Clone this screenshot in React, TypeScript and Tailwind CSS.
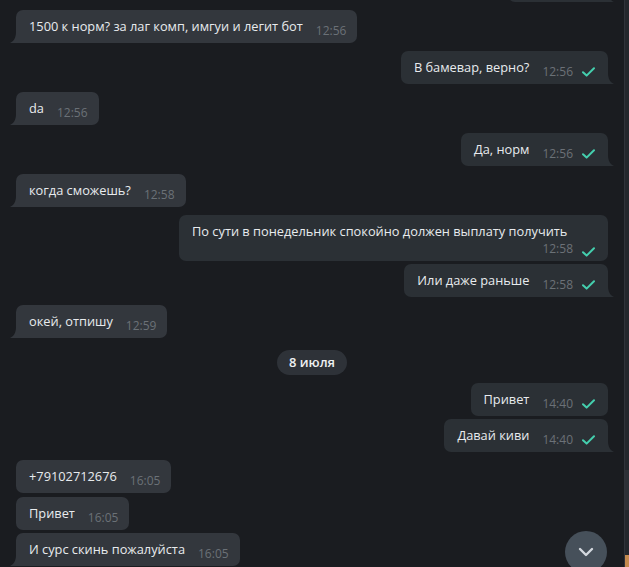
import React from 'react';
import clsx from 'clsx';

interface Msg {
  out: boolean;
  text: string;
  time: string;
  tail: boolean;
  gap: string;
}

const messages: Msg[] = [
  { out: false, text: '1500 к норм? за лаг комп, имгуи и легит бот', time: '12:56', tail: true, gap: 'mt-[8px]' },
  { out: true, text: 'В бамевар, верно?', time: '12:56', tail: true, gap: 'mt-[8px]' },
  { out: false, text: 'da', time: '12:56', tail: true, gap: 'mt-[8px]' },
  { out: true, text: 'Да, норм', time: '12:56', tail: true, gap: 'mt-[8px]' },
  { out: false, text: 'когда сможешь?', time: '12:58', tail: true, gap: 'mt-[8px]' },
];

const afterLong: Msg[] = [
  { out: true, text: 'Или даже раньше', time: '12:58', tail: true, gap: 'mt-[3px]' },
  { out: false, text: 'окей, отпишу', time: '12:59', tail: true, gap: 'mt-[8px]' },
];

const afterDate: Msg[] = [
  { out: true, text: 'Привет', time: '14:40', tail: false, gap: 'mt-[8px]' },
  { out: true, text: 'Давай киви', time: '14:40', tail: true, gap: 'mt-[3px]' },
  { out: false, text: '+79102712676', time: '16:05', tail: false, gap: 'mt-[8px]' },
  { out: false, text: 'Привет', time: '16:05', tail: false, gap: 'mt-[4px]' },
  { out: false, text: 'И сурс скинь пожалуйста', time: '16:05', tail: true, gap: 'mt-[3px]' },
];

function Check() {
  return (
    <svg width="13" height="10" viewBox="0 0 13 10" className="ml-[9px] shrink-0">
      <polyline points="1,5.2 4.6,8.6 12,1.2" fill="none" stroke="#44cfae" strokeWidth="2" strokeLinecap="round" strokeLinejoin="round" />
    </svg>
  );
}

function Tail({ out }: { out: boolean }) {
  if (out) {
    return (
      <svg width="6" height="11" viewBox="0 0 6 11" className="absolute right-[-6px] bottom-0">
        <path d="M0 0 C0 6 2.5 9.5 6 11 L0 11 Z" fill="#2b3035" />
      </svg>
    );
  }
  return (
    <svg width="6" height="11" viewBox="0 0 6 11" className="absolute left-[-6px] bottom-0">
      <path d="M6 0 C6 6 3.5 9.5 0 11 L6 11 Z" fill="#33373d" />
    </svg>
  );
}

function Bubble({ m }: { m: Msg }) {
  return (
    <div className={clsx('flex', m.out ? 'justify-end' : 'justify-start', m.gap)}>
      <div
        className={clsx(
          'relative flex items-end rounded-[7px] pl-[13px] pt-[6px] pb-[7px]',
          m.out ? 'bg-[#2b3035] pr-[13px]' : 'bg-[#33373d] pr-[11px]',
          m.tail && (m.out ? 'rounded-br-none' : 'rounded-bl-none')
        )}
      >
        <span className="text-[12.8px] leading-[20px] text-[#e8ebee] whitespace-nowrap">{m.text}</span>
        <span className="ml-[13px] -mb-[3px] text-[12px] leading-[16px] text-[#6b7177]">{m.time}</span>
        {m.out && <Check />}
        {m.tail && <Tail out={m.out} />}
      </div>
    </div>
  );
}

export default function App() {
  return (
    <div className="flex h-[567px] w-[629px] overflow-hidden bg-[#1a1c20]" style={{ fontFamily: '"Open Sans", "Noto Sans", sans-serif' }}>
      <div className="relative flex w-[624px] flex-col px-[16px]">
        {/* partially scrolled-out bubble */}
        <div className="-mt-[31px] flex justify-end">
          <div className="relative h-[33px] w-[100px] rounded-[7px] rounded-br-none bg-[#2b3035]">
            <Tail out />
          </div>
        </div>

        {messages.map((m, i) => (
          <Bubble key={i} m={m} />
        ))}

        {/* wrapped long message */}
        <div className="mt-[8px] flex justify-end">
          <div className="w-[429px] rounded-[7px] bg-[#2b3035] pl-[13px] pr-[13px] pt-[6px] pb-[4px]">
            <div className="text-[12.8px] leading-[20px] text-[#e8ebee] whitespace-nowrap">
              По сути в понедельник спокойно должен выплату получить
            </div>
            <div className="flex items-end justify-end">
              <span className="text-[12px] leading-[16px] text-[#6b7177]">12:58</span>
              <Check />
            </div>
          </div>
        </div>

        {afterLong.map((m, i) => (
          <Bubble key={i} m={m} />
        ))}

        <div className="mt-[12px] flex justify-center">
          <div className="flex h-[25px] items-center rounded-full bg-[#2e3238] px-[12px] text-[13px] font-semibold text-[#eef0f2]">
            8 июля
          </div>
        </div>

        {afterDate.map((m, i) => (
          <Bubble key={i} m={m} />
        ))}

        {/* scroll to bottom */}
        <button className="absolute right-[17px] bottom-[-6px] flex h-[42px] w-[42px] items-center justify-center rounded-full bg-[#46505a]">
          <svg width="16" height="10" viewBox="0 0 16 10">
            <polyline points="2,2 8,8 14,2" fill="none" stroke="#d3d8de" strokeWidth="2.4" strokeLinecap="round" strokeLinejoin="round" />
          </svg>
        </button>
      </div>

      {/* edge of side panel */}
      <div className="flex w-[5px] flex-col border-l border-[#30333a] bg-[#24272c]">
        <div className="h-[470px]" />
        <div className="h-[40px] bg-[#2d3036]" />
        <div className="flex-1" />
        <div className="h-[12px] bg-[#c58a4e]" />
      </div>
    </div>
  );
}
